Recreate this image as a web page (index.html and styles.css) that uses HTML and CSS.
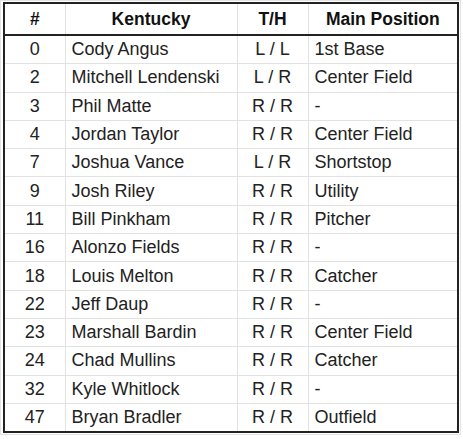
FILE: index.html
```html
<!DOCTYPE html>
<html>
<head>
<meta charset="utf-8">
<link rel="stylesheet" href="styles.css">
</head>
<body>
<div class="sheet">
<table class="roster">
<colgroup><col class="c-num"><col class="c-name"><col class="c-th"><col class="c-pos"></colgroup>
<thead>
<tr><th>#</th><th>Kentucky</th><th>T/H</th><th>Main Position</th></tr>
</thead>
<tbody>
<tr><td class="num">0</td><td>Cody Angus</td><td class="th">L / L</td><td>1st Base</td></tr>
<tr><td class="num">2</td><td>Mitchell Lendenski</td><td class="th">L / R</td><td>Center Field</td></tr>
<tr><td class="num">3</td><td>Phil Matte</td><td class="th">R / R</td><td>-</td></tr>
<tr><td class="num">4</td><td>Jordan Taylor</td><td class="th">R / R</td><td>Center Field</td></tr>
<tr><td class="num">7</td><td>Joshua Vance</td><td class="th">L / R</td><td>Shortstop</td></tr>
<tr><td class="num">9</td><td>Josh Riley</td><td class="th">R / R</td><td>Utility</td></tr>
<tr><td class="num">11</td><td>Bill Pinkham</td><td class="th">R / R</td><td>Pitcher</td></tr>
<tr><td class="num">16</td><td>Alonzo Fields</td><td class="th">R / R</td><td>-</td></tr>
<tr><td class="num">18</td><td>Louis Melton</td><td class="th">R / R</td><td>Catcher</td></tr>
<tr><td class="num">22</td><td>Jeff Daup</td><td class="th">R / R</td><td>-</td></tr>
<tr><td class="num">23</td><td>Marshall Bardin</td><td class="th">R / R</td><td>Center Field</td></tr>
<tr><td class="num">24</td><td>Chad Mullins</td><td class="th">R / R</td><td>Catcher</td></tr>
<tr><td class="num">32</td><td>Kyle Whitlock</td><td class="th">R / R</td><td>-</td></tr>
<tr><td class="num">47</td><td>Bryan Bradler</td><td class="th">R / R</td><td>Outfield</td></tr>
</tbody>
</table>
</div>
</body>
</html>
```
FILE: styles.css
```css
html, body {
  margin: 0;
  padding: 0;
  background: #fff;
}
.sheet {
  display: inline-block;
  border: 1px solid #e2e2e2;
  padding: 1px 1px 1px 2px;
}
.roster {
  border-collapse: collapse;
  table-layout: fixed;
  width: 456px;
  font-family: "Liberation Sans", Arial, sans-serif;
  font-size: 18px;
  color: #222;
  border: 2px solid #222;
}
.c-num { width: 61px; }
.c-name { width: 172px; }
.c-th { width: 71px; }
.c-pos { width: 150px; }
.roster th {
  height: 30px;
  font-size: 17.5px;
  font-weight: bold;
  color: #111;
  text-align: center;
  border: 1px solid #e2e2e2;
  border-bottom: 2px solid #222;
  border-top: 2px solid #222;
  padding: 0;
}
.roster td {
  height: 27.3px;
  border: 1px solid #e2e2e2;
  padding: 0 6px;
  white-space: nowrap;
  overflow: hidden;
}
.roster td.num, .roster td.th {
  text-align: center;
  padding: 0;
}
```
